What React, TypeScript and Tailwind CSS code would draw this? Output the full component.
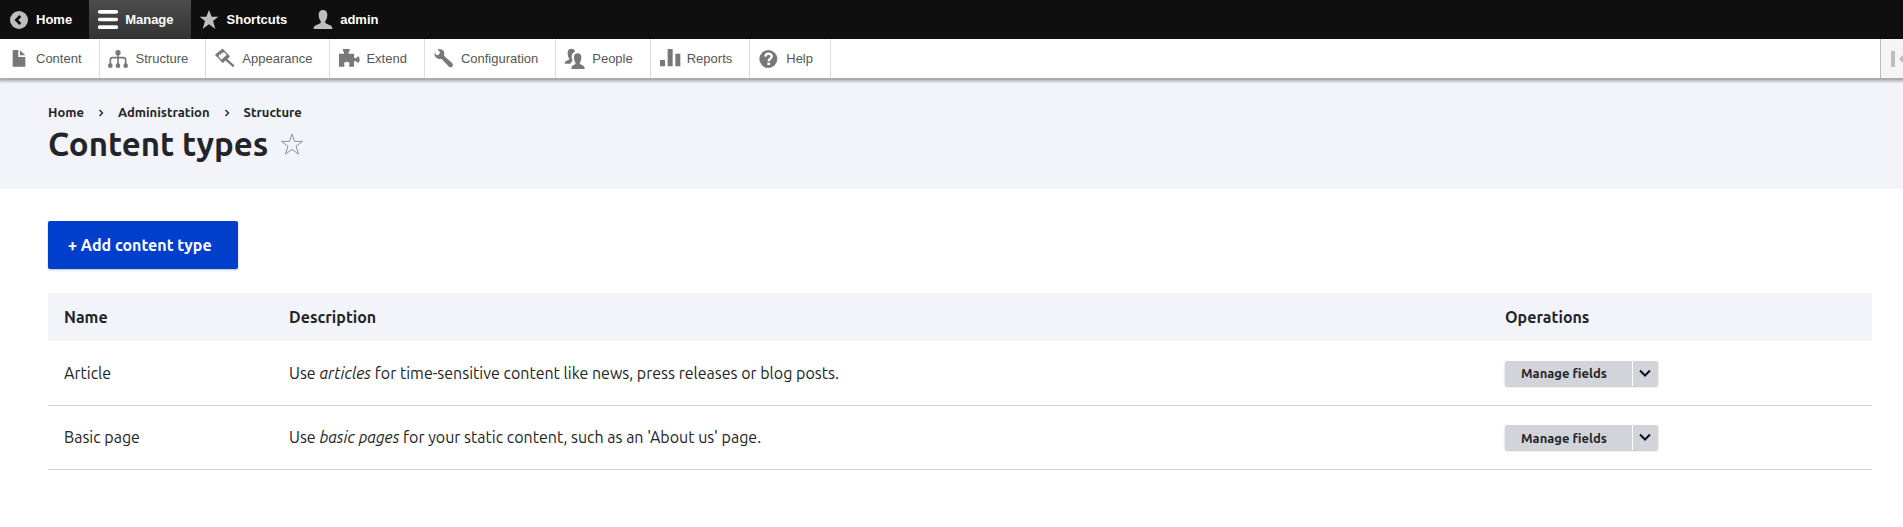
import type { ReactNode } from "react"

type Item = { label: string; icon: ReactNode; active?: boolean }

const barItems: Item[] = [
	{
		label: "Home",
		icon: (
			<>
				<circle cx="30" cy="33" r="27" fill="currentColor" />
				<path d="M34 21 22 33l12 12" fill="none" stroke="#0f0f0f" strokeWidth="8" />
			</>
		),
	},
	{
		label: "Manage",
		active: true,
		icon: (
			<path
				d="M5 3h50a5 5 0 0 1 0 11H5A5 5 0 0 1 5 3zM5 26h50a5 5 0 0 1 0 11H5a5 5 0 0 1 0-11zM5 49h50a5 5 0 0 1 0 11H5a5 5 0 0 1 0-11z"
				fill="currentColor"
			/>
		),
	},
	{
		label: "Shortcuts",
		icon: (
			<path
				d="m27 3 8 20h20L39 36l7 24-19-14L8 60l7-24L-1 23h20z"
				fill="currentColor"
			/>
		),
	},
	{
		label: "admin",
		icon: (
			<path
				d="M30 3c8 0 13 5 13 14 0 8-3 15-6 19v5c2 5 20 6 21 15v4H2v-4c1-9 19-10 21-15v-5c-3-4-6-11-6-19C17 8 22 3 30 3z"
				fill="currentColor"
			/>
		),
	},
]

const trayItems: Item[] = [
	{
		label: "Content",
		icon: (
			<>
				<path d="M11 6h17v21h21v29H11z" fill="currentColor" />
				<path d="M33 7v15h16z" fill="currentColor" />
			</>
		),
	},
	{
		label: "Structure",
		icon: (
			<>
				<path
					d="M27 13v38M4 51V36q0-7 7-7h32q7 0 7 7v15"
					fill="none"
					stroke="currentColor"
					strokeWidth="5"
				/>
				<g fill="currentColor">
					<circle cx="27" cy="14" r="8" />
					<circle cx="4" cy="53" r="7" />
					<circle cx="27" cy="53" r="7" />
					<circle cx="50" cy="53" r="7" />
				</g>
			</>
		),
	},
	{
		label: "Appearance",
		icon: (
			<>
				<path d="M0 20 21 3l8 8-6 4-3-1-2 6-5-1-2 7-5 1z" fill="currentColor" />
				<path
					d="M22 4 42 25 23 42 3 20"
					fill="none"
					stroke="currentColor"
					strokeWidth="4"
				/>
				<path d="m18 36 19-17 7 7-7 7 20 18q2 4-3 7L31 37l-7 7z" fill="currentColor" />
			</>
		),
	},
	{
		label: "Extend",
		icon: (
			<path
				d="M0 17h15q2-4-3-8V3h20v6q-6 4-3 8h16v11q3 4 7 2 3-5 8-4 5 9-1 18-5 1-8-4-4-2-6 2v14H31q-3-4 1-7 0-8-9-8-8 0-8 8 4 3 0 7H0z"
				fill="currentColor"
			/>
		),
	},
	{
		label: "Configuration",
		icon: (
			<path
				d="M11 4q8-3 15 2 7 6 4 17l25 23q4 6 0 10-5 4-10 0L22 32q-8 2-14-2-8-6-7-16l8 8q7 0 9-9z"
				fill="currentColor"
			/>
		),
	},
	{
		label: "People",
		icon: (
			<>
				<path
					d="M19 2c7 0 11 4 11 9-7 3-10 8-10 14 0 7 1 9 3 12l-7 10H-1c0-12 14-9 14-15-3-4-5-9-5-18 0-8 4-12 11-12z"
					fill="currentColor"
				/>
				<path
					d="M38 16c7 0 11 4 11 12 0 9-2 13-5 17 0 7 14 5 15 15v3H19v-3c1-10 13-8 13-15-3-4-5-8-5-17 0-8 4-12 11-12z"
					fill="currentColor"
				/>
			</>
		),
	},
	{
		label: "Reports",
		icon: <path d="M0 36h15v19H0zM23 3h15v52H23zM46 17h15v38H46z" fill="currentColor" />,
	},
	{
		label: "Help",
		icon: (
			<>
				<circle cx="28" cy="33" r="27" fill="currentColor" />
				<path
					d="M19 26q1-9 10-9 9 1 9 8 0 5-5 8-4 2-4 7"
					fill="none"
					stroke="#fff"
					strokeWidth="7"
				/>
				<path d="M25 44h8v7h-8z" fill="#fff" />
			</>
		),
	},
]

const rows = [
	{
		name: "Article",
		description: (
			<>
				Use <em>articles</em> for time-sensitive content like news, press releases or blog
				posts.
			</>
		),
	},
	{
		name: "Basic page",
		description: (
			<>
				Use <em>basic pages</em> for your static content, such as an 'About us' page.
			</>
		),
	},
]

function Icon({ children }: { children: ReactNode }) {
	return (
		<svg viewBox="0 0 60 63" className="h-[21px] w-5 shrink-0 overflow-visible" aria-hidden="true">
			{children}
		</svg>
	)
}

function Chevron() {
	return (
		<svg viewBox="0 0 6 8" className="mx-[14px] mt-px h-2 w-[6px]" aria-hidden="true">
			<path d="m1.5 1 3 3-3 3" fill="none" stroke="#232429" strokeWidth="1.4" />
		</svg>
	)
}

function Toolbar() {
	return (
		<div className="font-['Liberation_Sans',Arial,sans-serif] text-[13px] leading-4">
			<nav className="flex h-[39px] bg-[#0f0f0f] font-bold text-white" aria-label="Toolbar items">
				{barItems.map((item) => (
					<a
						key={item.label}
						href="#"
						className={
							item.active
								? "flex items-center gap-[7px] bg-linear-to-b from-[#4d4d4d] to-[#333] pr-[17px] pl-[9px]"
								: "flex items-center gap-[7px] pr-[17px] pl-[9px]"
						}
					>
						<span className={item.active ? "text-white" : "text-[#bebebe]"}>
							<Icon>{item.icon}</Icon>
						</span>
						{item.label}
					</a>
				))}
			</nav>
			<nav
				className="relative flex h-[39px] bg-white text-[#565656] shadow-[0_1px_0_#aaa,0_2px_3px_1px_rgba(0,0,0,0.35)]"
				aria-label="Administration menu"
			>
				{trayItems.map((item) => (
					<a
						key={item.label}
						href="#"
						className="flex items-center gap-[7px] border-r border-[#ddd] pr-[17px] pl-[9px]"
					>
						<span className="text-[#787878]">
							<Icon>{item.icon}</Icon>
						</span>
						{item.label}
					</a>
				))}
				<button
					type="button"
					aria-label="Vertical orientation"
					className="ml-auto flex w-[23px] items-center overflow-hidden border-l border-[#bbb] bg-[#f5f5f5] pl-[10px] text-[#bebebe]"
				>
					<svg viewBox="0 0 20 16" className="h-4 w-5 shrink-0" aria-hidden="true">
						<path d="M0 0h4v16H0zM8 8l7-7v4h5v6h-5v4z" fill="currentColor" />
					</svg>
				</button>
			</nav>
		</div>
	)
}

function PageHeader() {
	return (
		<header className="bg-[#f3f4f9] px-12 pt-[26px] pb-6">
			<nav className="flex items-center text-[13px] leading-4 font-bold" aria-label="Breadcrumb">
				<a href="#">Home</a>
				<Chevron />
				<a href="#">Administration</a>
				<Chevron />
				<a href="#">Structure</a>
			</nav>
			<div className="mt-[3px] flex items-center gap-3">
				<h1 className="text-[33px] leading-[42px] font-bold">Content types</h1>
				<button type="button" aria-label="Add to shortcuts">
					<svg viewBox="0 0 24 24" className="h-6 w-6" aria-hidden="true">
						<path
							d="m12 2 2.500 7.400h8l-6.400 4.800 2.400 7.900L12 17.400l-6.500 4.700 2.400-7.900-6.400-4.800h8z"
							fill="none"
							stroke="#8e929c"
						/>
					</svg>
				</button>
			</div>
		</header>
	)
}

function DropButton() {
	return (
		<div className="inline-flex h-[25px] gap-px rounded-xs align-middle shadow-[0_1px_2px_rgba(0,0,0,0.25)]">
			<button
				type="button"
				className="rounded-l-xs bg-[#d3d4d9] pr-[25px] pl-4 text-[13px] leading-4 font-bold"
			>
				Manage fields
			</button>
			<button
				type="button"
				aria-label="List additional actions"
				className="flex w-[25px] items-center justify-center rounded-r-xs bg-[#d3d4d9]"
			>
				<svg viewBox="0 0 14 9" className="h-[9px] w-[14px]" aria-hidden="true">
					<path d="m2 1.500 5 5 5-5" fill="none" stroke="#000f33" strokeWidth="2" />
				</svg>
			</button>
		</div>
	)
}

function ContentTypes() {
	return (
		<main className="pt-8 pr-[31px] pb-14 pl-12">
			<a
				href="#"
				className="inline-block rounded-xs bg-[#003ecc] py-4 pr-[26px] pl-5 align-top leading-4 font-bold text-white shadow-[0_1px_2px_rgba(0,0,0,0.25)]"
			>
				+ Add content type
			</a>
			<table className="mt-6 w-full table-fixed text-left">
				<thead>
					<tr className="h-12 bg-[#f3f4f9]">
						<th className="w-[225px] px-4">Name</th>
						<th className="px-4">Description</th>
						<th className="w-[383px] px-4">Operations</th>
					</tr>
				</thead>
				<tbody>
					{rows.map((row) => (
						<tr key={row.name} className="h-16 border-b border-[#d3d4d9]">
							<td className="px-4">{row.name}</td>
							<td className="px-4">{row.description}</td>
							<td className="px-4">
								<DropButton />
							</td>
						</tr>
					))}
				</tbody>
			</table>
		</main>
	)
}

export default function App() {
	return (
		<div className="bg-white font-[Ubuntu,'Noto_Sans',sans-serif] text-base text-[#232429]">
			<Toolbar />
			<PageHeader />
			<ContentTypes />
		</div>
	)
}
